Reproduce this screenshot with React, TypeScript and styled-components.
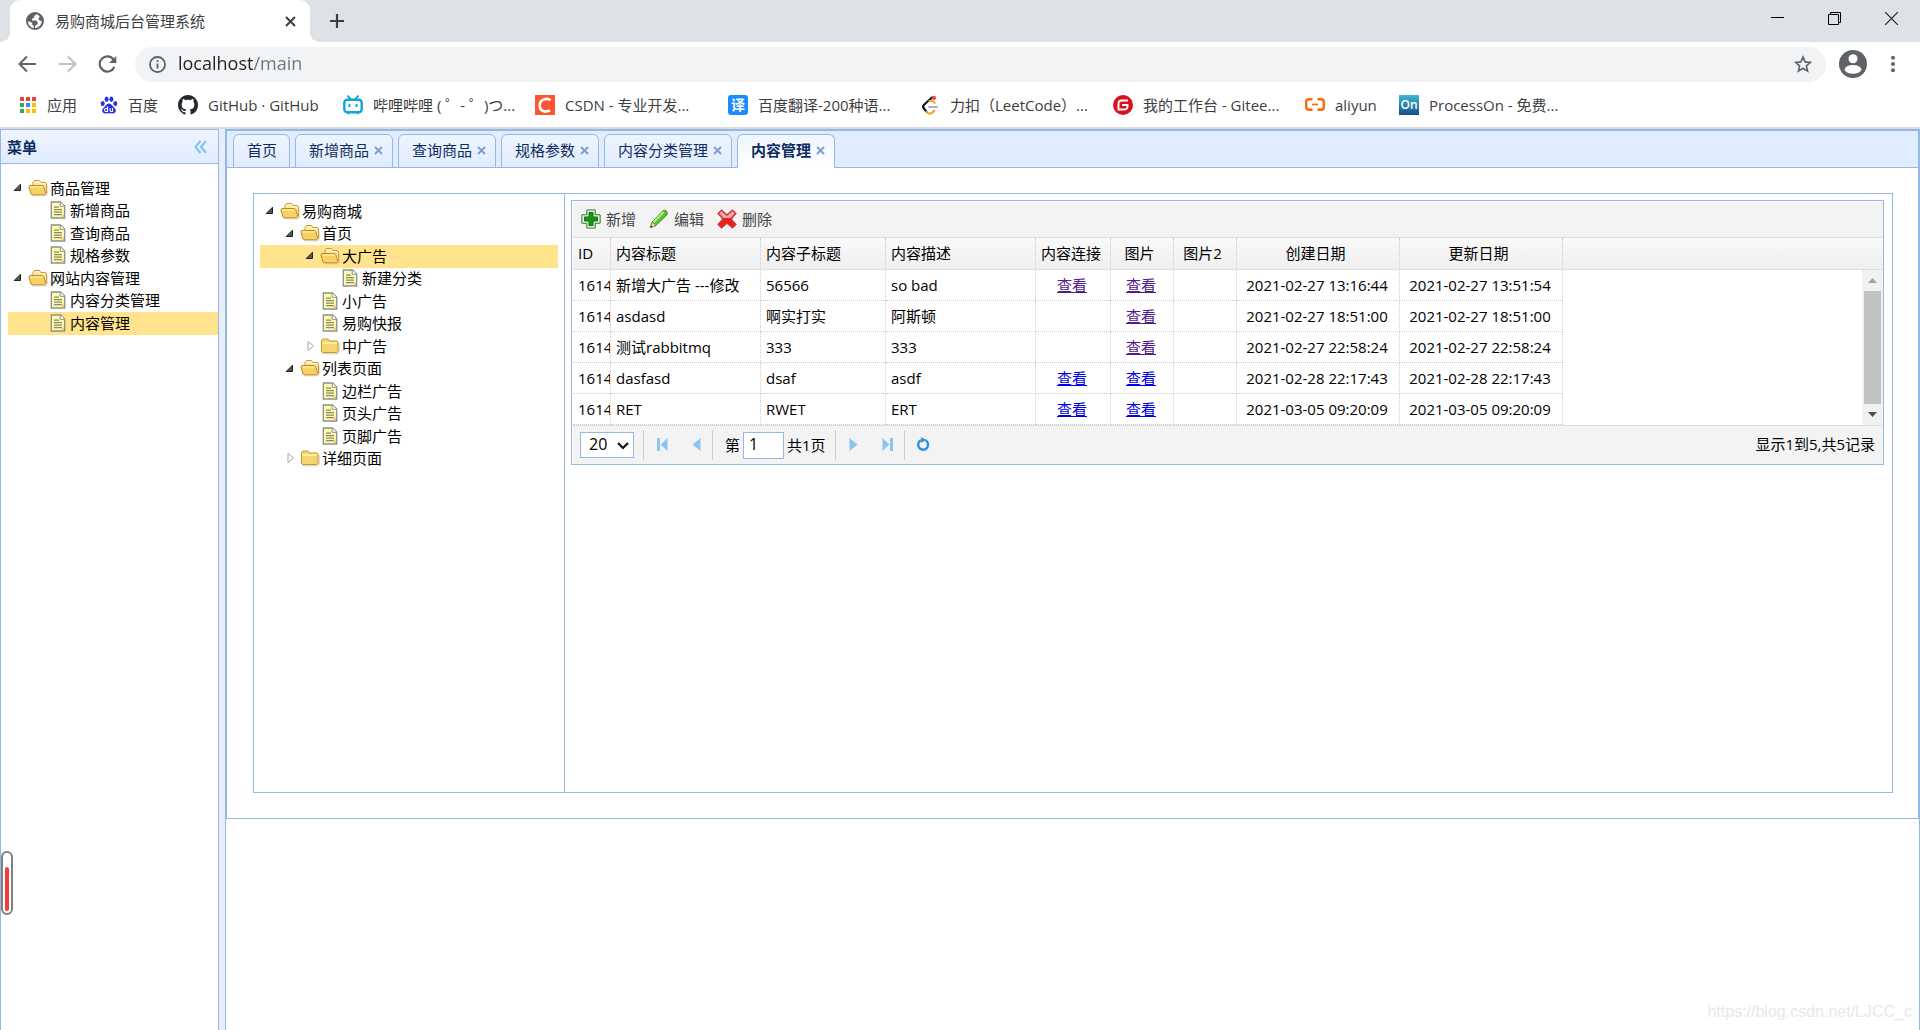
import React from "react";
import styled, { createGlobalStyle, css } from "styled-components";

const line = "#95b8e7";
const navy = "#0e2d5f";
const gray = "#5f6368";

const Global = createGlobalStyle`
  *, *::before, *::after { box-sizing: border-box; }
  body { margin: 0; background: #fff; }
  body, button, input, select {
    font-family: "Open Sans", "Noto Sans", "Noto Sans CJK SC", sans-serif;
    font-size: 15px;
    line-height: 20px;
  }
  button { border: 0; padding: 0; background: none; color: inherit; cursor: pointer; }
  ul { list-style: none; margin: 0; padding: 0; }
  svg { display: block; flex: none; }
`;

/* ---------- browser frame ---------- */

const Page = styled.div`
  min-height: 100vh;
  display: flex;
  flex-direction: column;
  position: relative;
`;

const TabStrip = styled.header`
  height: 42px;
  display: flex;
  align-items: stretch;
  background: #dee1e6;
  padding-left: 10px;
`;

const BrowserTab = styled.div`
  width: 300px;
  display: flex;
  align-items: center;
  gap: 11px;
  padding: 0 14px 0 16px;
  background: #fff;
  border-radius: 10px 10px 0 0;
  color: #3c4043;
  position: relative;
  &::before, &::after {
    content: "";
    position: absolute;
    bottom: 0;
    width: 10px;
    height: 10px;
  }
  &::before { left: -10px; background: radial-gradient(circle at 0 0, transparent 10px, #fff 10px); }
  &::after { right: -10px; background: radial-gradient(circle at 100% 0, transparent 10px, #fff 10px); }
`;

const BrowserTabTitle = styled.span`
  flex: 1;
`;

const NewTab = styled.button`
  margin-left: 19px;
`;

const WindowButtons = styled.div`
  margin-left: auto;
  display: flex;
  align-items: flex-start;
`;

const WindowButton = styled.button`
  width: 57px;
  height: 37px;
  display: flex;
  align-items: center;
  justify-content: center;
`;

const NavBar = styled.nav`
  height: 45px;
  display: flex;
  align-items: center;
  padding: 0 17px 1px 17px;
`;

const NavButton = styled.button`
  width: 40px;
  height: 30px;
  display: flex;
  align-items: center;
`;

const AddressBar = styled.div`
  flex: 1;
  height: 35px;
  margin-right: 13px;
  margin-left: -2px;
  display: flex;
  align-items: center;
  gap: 12px;
  padding: 0 14px 0 14px;
  border-radius: 18px;
  background: #f1f3f4;
`;

const AddressInput = styled.input`
  flex: 1;
  min-width: 0;
  padding: 0 0 2px;
  border: 0;
  outline: 0;
  font-size: 18px;
  line-height: 26px;
  color: transparent;
  background: linear-gradient(to right, #202124 76px, #6f7378 76px);
  background-clip: text;
  -webkit-background-clip: text;
`;

const MenuButton = styled.button`
  width: 20px;
  margin-left: 16px;
  display: flex;
  justify-content: center;
`;

const Bookmarks = styled.ul`
  height: 40px;
  display: grid;
  grid-template-columns: 81px 78px 165px 192px 193px 192px 193px 192px 94px auto;
  justify-content: start;
  align-items: center;
  padding: 0 0 4px 19px;
`;

const BookmarkLink = styled.a`
  display: flex;
  align-items: center;
  gap: 10px;
  color: #3c4043;
  text-decoration: none;
  white-space: nowrap;
`;

/* ---------- workspace ---------- */

const Workspace = styled.main`
  flex: 1;
  display: flex;
  gap: 6px;
  background: #e6eef8;
  border-top: 2px solid #dadada;
`;

const Sidebar = styled.aside`
  width: 219px;
  flex: none;
  background: #fff;
  border: 1px solid ${line};
  border-bottom: 0;
`;

const SidebarHeader = styled.div`
  height: 34px;
  display: flex;
  align-items: center;
  justify-content: space-between;
  padding: 0 11px 0 6px;
  border-bottom: 1px solid ${line};
  background: linear-gradient(to bottom, #eff5ff, #e0ecff);
  color: ${navy};
  font-weight: bold;
`;

const SidebarBody = styled.div`
  padding: 13px 0 0 7px;
`;

const Center = styled.section`
  flex: 1;
  min-width: 0;
  background: #fff;
  border: 1px solid ${line};
  border-bottom: 0;
`;

const TabsPanel = styled.div`
  border: 1px solid ${line};
`;

const TabList = styled.ul`
  height: 37px;
  display: flex;
  align-items: flex-end;
  gap: 5px;
  padding-left: 6px;
  background: #e0ecff;
  box-shadow: inset 0 -1px ${line};
`;

const TabItem = styled.li<{ $active?: boolean }>`
  height: 34px;
  display: flex;
  align-items: center;
  gap: 5px;
  padding: 0 9px 2px 13px;
  border: 1px solid ${line};
  border-radius: 6px 6px 0 0;
  background: linear-gradient(to bottom, #eff5ff, #e0ecff);
  color: ${navy};
  &:first-child { padding-right: 12px; }
  ${(p) => p.$active && css`
    border-bottom-color: #fff;
    background: linear-gradient(to bottom, #eff5ff, #fff);
    font-weight: bold;
  `}
`;

const TabButton = styled.button`
  font-weight: inherit;
`;

const TabBody = styled.div`
  padding: 25px 25px 25px 26px;
`;

const ContentPanel = styled.div`
  min-height: 600px;
  display: flex;
  border: 1px solid ${line};
`;

const CategoryPane = styled.div`
  width: 311px;
  flex: none;
  padding: 6px 6px 0 6px;
  border-right: 1px solid ${line};
`;

const GridPane = styled.div`
  flex: 1;
  min-width: 0;
  padding: 6px 8px 0 6px;
`;

/* ---------- tree ---------- */

const TreeRow = styled.li<{ $level: number; $selected?: boolean }>`
  height: 23px;
  display: flex;
  align-items: center;
  padding: 0 0 2px ${(p) => p.$level * 20}px;
  background: ${(p) => (p.$selected ? "#ffe48d" : "transparent")};
  color: #000;
  white-space: nowrap;
  &:nth-child(even) { height: 22px; }
`;

const TreeIcon = styled.span`
  width: 20px;
  display: flex;
  justify-content: center;
`;

const TreeLabel = styled.span`
  padding-left: 2px;
`;

/* ---------- data grid ---------- */

const Grid = styled.div`
  border: 1px solid ${line};
  padding: 1px 0 0 1px;
`;

const Toolbar = styled.div`
  height: 36px;
  display: flex;
  align-items: center;
  gap: 13px;
  padding: 0 0 2px 8px;
  border-bottom: 1px solid #ddd;
  background: #f3f3f3;
`;

const ToolButton = styled.button`
  display: flex;
  align-items: center;
  gap: 5px;
  color: #444;
`;

const GridView = styled.div`
  position: relative;
  border-bottom: 1px solid #ddd;
`;

const Table = styled.table`
  width: 100%;
  table-layout: fixed;
  border-collapse: separate;
  border-spacing: 0;
`;

const HeadRow = styled.tr`
  background: linear-gradient(to bottom, #f9f9f9, #efefef);
`;

const Col = styled.col<{ $w?: number }>`
  ${(p) => p.$w && css`width: ${p.$w}px;`}
`;

const Th = styled.th<{ $center?: boolean; $last?: boolean }>`
  height: 32px;
  padding: 0 10px 2px 5px;
  border-bottom: 1px solid #ddd;
  border-right: ${(p) => (p.$last ? "0" : "1px dotted #ccc")};
  font-weight: normal;
  text-align: ${(p) => (p.$center ? "center" : "left")};
  white-space: nowrap;
`;

const Td = styled.td<{ $center?: boolean; $last?: boolean }>`
  height: 31px;
  padding: ${(p) => (p.$center ? "0 2px 0 0" : "0 0 0 5px")};
  ${(p) => !p.$last && css`
    border-right: 1px dotted #ccc;
    border-bottom: 1px dotted #ccc;
  `}
  text-align: ${(p) => (p.$center ? "center" : "left")};
  white-space: nowrap;
  overflow: hidden;
`;

const ViewLink = styled.a<{ $visited?: boolean }>`
  color: ${(p) => (p.$visited ? "#551a8b" : "#0000ee")};
  text-decoration: underline;
`;

const ScrollTrack = styled.div`
  position: absolute;
  top: 32px;
  right: 0;
  bottom: 0;
  width: 21px;
  display: flex;
  flex-direction: column;
  align-items: center;
  background: #f1f1f1;
`;

const ScrollArrow = styled.button`
  height: 21px;
  display: flex;
  align-items: center;
`;

const ScrollThumb = styled.div`
  flex: 1;
  width: 17px;
  background: #c1c1c1;
`;

const Pager = styled.div`
  height: 38px;
  display: flex;
  align-items: center;
  padding: 0 8px 0 7px;
  background: #f3f3f3;
`;

const PageSize = styled.label`
  position: relative;
  margin-right: 9px;
  svg { position: absolute; right: 5px; top: 10px; pointer-events: none; }
`;

const SizeSelect = styled.select`
  display: block;
  width: 54px;
  height: 26px;
  padding: 0 0 2px 8px;
  appearance: none;
  border: 1px solid ${line};
  border-radius: 0;
  background: #fff;
  font-size: 16px;
`;

const Separator = styled.span`
  width: 1px;
  height: 30px;
  background: #ccc;
`;

const PagerButton = styled.button`
  width: 34px;
  height: 30px;
  padding: 0 0 2px 2px;
  display: flex;
  align-items: center;
  justify-content: center;
`;

const PageField = styled.label`
  display: flex;
  align-items: center;
  gap: 3px;
  padding: 0 9px 0 12px;
`;

const PageInput = styled.input`
  width: 41px;
  height: 27px;
  padding: 0 5px 2px;
  border: 1px solid ${line};
  font-size: 16px;
`;

const PagerInfo = styled.span`
  margin-left: auto;
  padding-bottom: 2px;
`;

/* ---------- overlays ---------- */

const Gauge = styled.div`
  position: absolute;
  left: 1px;
  top: 851px;
  width: 12px;
  height: 64px;
  padding: 14px 2px 2px;
  border: 2px solid #808080;
  border-radius: 6px;
  background: #fff;
`;

const GaugeFill = styled.div`
  height: 44px;
  border-radius: 2px;
  background: #f43b3b;
`;

const Watermark = styled.span`
  position: absolute;
  right: 8px;
  bottom: 8px;
  font-family: "Liberation Sans", Arial, sans-serif;
  font-size: 16px;
  color: #e8e8e8;
`;

/* ---------- drawings ---------- */

const OpenFolder = () => (
  <svg width="20" height="18" viewBox="0 0 20 18">
    <path d="M5 15V3.5L6.5 1.5h5L13 3.5h4.5L18.5 5v9z" fill="#fbe9a0" stroke="#c9952c" />
    <path d="M6.5 5V3.6L7.3 2.7h3.6l1.2 1.8h5" fill="none" stroke="#fffbe0" />
    <path d="M.8 7.5 2 6.5h12.5l1.3 1 2 7-1 1.3H4.2L3 15z" fill="#f7d263" stroke="#c08a20" />
    <path d="M2.2 8h12.4" stroke="#fff3b8" />
    <path d="M4 16.8h14l1-1.6V7" fill="none" stroke="#b9b3a0" strokeOpacity=".7" />
  </svg>
);

const ClosedFolder = () => (
  <svg width="20" height="18" viewBox="0 0 20 18">
    <path d="M1.5 14.5V3.5L3 2h5l1.5 2H17l1 1v9.5l-1 1H2.5z" fill="#f7d56d" stroke="#c9952c" />
    <path d="M2.5 6h14.5" stroke="#fff3b8" strokeWidth="1.5" />
    <path d="M2.5 16.8H18l1.2-1.3V6" fill="none" stroke="#b9b3a0" strokeOpacity=".7" />
  </svg>
);

const FileIcon = () => (
  <svg width="16" height="18" viewBox="0 0 16 18">
    <path d="M1.3 1h9.2L14.7 5v12H1.3z" fill="#fdfbb0" stroke="#8d9088" strokeWidth="1.3" />
    <path d="M10.2 1v4.3h4.3" fill="#fff" stroke="#8d9088" />
    <path d="M4 6.2h5M4 8.7h8M4 11.2h8M4 13.7h8" stroke="#8a8a6a" strokeWidth="1.2" />
    <path d="M14 16.3h-3l3-3.6z" fill="#f7bd8c" />
  </svg>
);

const ArrowOpen = () => (
  <svg width="11" height="9" viewBox="0 0 11 9">
    <path d="M7.500 1.200V7.500H1.200z" fill="#555" stroke="#222" />
  </svg>
);

const ArrowClosed = () => (
  <svg width="10" height="12" viewBox="0 0 10 12">
    <path d="M3 1.500 8.500 6 3 10.500z" fill="#fff" stroke="#a8a8a8" />
  </svg>
);

const CloseMark = () => (
  <svg width="9" height="9" viewBox="0 0 9 9">
    <path d="M1 1l7 7M8 1 1 8" stroke="#7d9cc9" strokeWidth="1.8" />
  </svg>
);

const Globe = () => (
  <svg width="18" height="18" viewBox="0 0 18 18">
    <circle cx="9" cy="9" r="9" fill={gray} />
    <path d="M10.5 2.2 8.2 4v1.7L6 6.8v1.8h4.2l1.6 1.6-.5 2.3-1.9 1-.6 2.6c3.6-.2 6.9-3.1 7-7.1l-2-.2-1.5-1.8 1.4-2.6c-.9-1.1-2-1.8-3.2-2.2z" fill="#fff" />
    <path d="M2 9.2l4.2 1.6v2l1.5 1.2v1.9C4.600 15.5 2 12.800 2 9.200z" fill="#fff" />
  </svg>
);

const AppsIcon = () => {
  const colors = ["#ea4335", "#ea4335", "#ea4335", "#34a853", "#4285f4", "#fbbc04", "#34a853", "#fbbc04", "#fbbc04"];
  return (
    <svg width="18" height="18" viewBox="0 0 18 18">
      {colors.map((c, i) => (
        <rect key={i} x={1 + (i % 3) * 6} y={1 + Math.floor(i / 3) * 6} width="4" height="4" fill={c} />
      ))}
    </svg>
  );
};

const BaiduIcon = () => (
  <svg width="18" height="18" viewBox="0 0 18 18" fill="#2932e1">
    <ellipse cx="2.7" cy="7.5" rx="2" ry="2.5" />
    <ellipse cx="6.6" cy="3.3" rx="2" ry="2.7" />
    <ellipse cx="11.4" cy="3.3" rx="2" ry="2.7" />
    <ellipse cx="15.3" cy="7.5" rx="2" ry="2.5" />
    <path d="M9 7.5c2.5 0 3.500 2.500 5 4s2.500 3 1.300 4.800c-1.300 1.900-4 1-6.300 1s-5 .9-6.300-1C1.500 14.500 2.500 13 4 11.500s2.500-4 5-4z" />
    <path d="M7.5 10.500v5H6a1.400 1.400 0 0 1 0-3h1.500M10 12v2.300q0 1.200 1.200 1.200h1.300V12" fill="none" stroke="#fff" strokeWidth="1.1" />
  </svg>
);

const GithubIcon = () => (
  <svg width="20" height="20" viewBox="0 0 16 16" fill="#24292e">
    <path d="M8 0C3.58 0 0 3.58 0 8c0 3.54 2.29 6.53 5.47 7.59.4.07.55-.17.55-.38 0-.19-.01-.82-.01-1.49-2.01.37-2.53-.49-2.69-.94-.09-.23-.48-.94-.82-1.13-.28-.15-.68-.52-.01-.53.63-.01 1.08.58 1.23.82.72 1.21 1.87.87 2.33.66.07-.52.28-.87.51-1.07-1.78-.2-3.64-.89-3.64-3.95 0-.87.31-1.59.82-2.15-.08-.2-.36-1.02.08-2.12 0 0 .67-.21 2.2.82.64-.18 1.32-.27 2-.27s1.36.09 2 .27c1.53-1.04 2.2-.82 2.2-.82.44 1.1.16 1.92.08 2.12.51.56.82 1.27.82 2.15 0 3.07-1.87 3.75-3.65 3.95.29.25.54.73.54 1.48 0 1.07-.01 1.93-.01 2.2 0 .21.15.46.55.38A8.01 8.01 0 0 0 16 8c0-4.42-3.58-8-8-8z" />
  </svg>
);

const BiliIcon = () => (
  <svg width="20" height="20" viewBox="0 0 20 20" fill="none" stroke="#12a5e0" strokeLinecap="round">
    <rect x="1.3" y="4.8" width="17.4" height="12.4" rx="3" strokeWidth="2.4" />
    <path d="M5 1.200l2.500 3M15 1.200l-2.500 3" strokeWidth="2" />
    <path d="M6.500 9.700v1.600M13.500 9.700v1.600" strokeWidth="2" />
    <path d="M5 18.500h1M14 18.500h1" strokeWidth="1.5" />
  </svg>
);

const Badge = styled.span<{ $bg: string; $round?: number; $size: number }>`
  width: 20px;
  height: 20px;
  display: flex;
  align-items: center;
  justify-content: center;
  border-radius: ${(p) => p.$round || 0}px;
  background: ${(p) => p.$bg};
  color: #fff;
  font-size: ${(p) => p.$size}px;
  font-weight: 600;
`;

const CsdnIcon = () => (
  <svg width="20" height="20" viewBox="0 0 20 20">
    <path d="M0 0h20v20H0z" fill="#fc5531" />
    <path d="M15.500 5.200C12 2.500 5 4 4.700 10.200 4.500 16.500 10.500 17.500 15 15.300" fill="none" stroke="#fff" strokeWidth="2.6" />
  </svg>
);

const LeetIcon = () => (
  <svg width="20" height="20" viewBox="0 0 20 20" fill="none" strokeLinecap="round" strokeWidth="2.2">
    <path d="M12 2.500 4 9.800q-1.700 1.700 0 3.800l2.500 3" stroke="#111" />
    <path d="M6.500 17q3.500 3.500 7-.5l.8-.8M9.500 6l3-.2 2.200 2" stroke="#f5a32c" />
    <path d="M9 12h8" stroke="#b3b3b3" />
    <circle cx="14" cy="2.8" r="1.7" fill="#e14b5a" stroke="#e14b5a" strokeWidth="1" />
  </svg>
);

const GiteeIcon = () => (
  <svg width="20" height="20" viewBox="0 0 20 20">
    <circle cx="10" cy="10" r="10" fill="#d8121c" />
    <path d="M15 5.500H8.500a3 3 0 0 0-3 3v6h6.200a2.800 2.800 0 0 0 2.800-2.800V10H9" fill="none" stroke="#fff" strokeWidth="1.9" />
  </svg>
);

const AliyunIcon = () => (
  <svg width="20" height="20" viewBox="0 0 20 20" fill="none" stroke="#ff6a00" strokeWidth="2.4">
    <path d="M7.500 4.200H4A2.800 2.800 0 0 0 1.200 7v5A2.800 2.800 0 0 0 4 14.800h3.500M12.500 4.200H16A2.800 2.800 0 0 1 18.800 7v5a2.800 2.800 0 0 1-2.800 2.800h-3.500" />
    <path d="M7 9.500h6" strokeWidth="1.6" />
  </svg>
);

const AddIcon = () => (
  <svg width="20" height="20" viewBox="0 0 20 20">
    <path d="M6.500.8h7l.8.8v4.100h4.100l.8.8v7l-.8.8h-4.100v4.100l-.8.8h-7l-.8-.8v-4.100H1.600l-.8-.8v-7l.8-.8h4.100V1.600z" fill="#e2f2df" stroke="#5d8f5d" strokeWidth="1.3" />
    <path d="M8 3.500h4V8h4.500v4H12v4.500H8V12H3.500V8H8z" fill="#159415" stroke="#0b760b" />
  </svg>
);

const PencilIcon = () => (
  <svg width="20" height="20" viewBox="0 0 20 20">
    <path d="M1.500 18.300 3.200 13 13.800 1.800q2-1.300 3.600.2t.6 3.700L6.800 16.600z" fill="#5fbf2c" stroke="#3d8a22" />
    <path d="M4.500 13.300 14.500 3" stroke="#b5ee84" strokeWidth="2" />
    <path d="M1.500 18.300 3.200 13l3.600 3.600z" fill="#f2e2b8" stroke="#6a7a4a" strokeWidth=".7" />
    <path d="M1.200 18.700l.7-2.300 1.500 1.500z" fill="#333" />
  </svg>
);

const DeleteIcon = () => (
  <svg width="20" height="20" viewBox="0 0 20 20">
    <path d="M4.500.8 10 5.500 15.500.8l3.700 3.700L14.500 10l4.700 5.500-3.700 3.700L10 14.500l-5.500 4.700-3.700-3.700L5.500 10 .8 4.500z" fill="#e82020" stroke="#c04040" strokeLinejoin="round" />
    <path d="M4.500 2 10 7l5.500-5 2.300 2.500L13.500 9h-7L2.200 4.500z" fill="#f7a8a8" />
  </svg>
);

/* ---------- content ---------- */

type Node = { label: string; level: number; kind: "open" | "closed" | "file"; selected?: boolean };

const menu: Node[] = [
  { label: "商品管理", level: 0, kind: "open" },
  { label: "新增商品", level: 1, kind: "file" },
  { label: "查询商品", level: 1, kind: "file" },
  { label: "规格参数", level: 1, kind: "file" },
  { label: "网站内容管理", level: 0, kind: "open" },
  { label: "内容分类管理", level: 1, kind: "file" },
  { label: "内容管理", level: 1, kind: "file", selected: true },
];

const categories: Node[] = [
  { label: "易购商城", level: 0, kind: "open" },
  { label: "首页", level: 1, kind: "open" },
  { label: "大广告", level: 2, kind: "open", selected: true },
  { label: "新建分类", level: 3, kind: "file" },
  { label: "小广告", level: 2, kind: "file" },
  { label: "易购快报", level: 2, kind: "file" },
  { label: "中广告", level: 2, kind: "closed" },
  { label: "列表页面", level: 1, kind: "open" },
  { label: "边栏广告", level: 2, kind: "file" },
  { label: "页头广告", level: 2, kind: "file" },
  { label: "页脚广告", level: 2, kind: "file" },
  { label: "详细页面", level: 1, kind: "closed" },
];

const Tree = ({ nodes, name }: { nodes: Node[]; name: string }) => (
  <ul role="tree" aria-label={name}>
    {nodes.map((n) => (
      <TreeRow key={n.label} role="treeitem" aria-level={n.level + 1} aria-selected={!!n.selected} $level={n.level} $selected={n.selected}>
        <TreeIcon>{n.kind === "open" ? <ArrowOpen /> : n.kind === "closed" ? <ArrowClosed /> : null}</TreeIcon>
        <TreeIcon>{n.kind === "open" ? <OpenFolder /> : n.kind === "closed" ? <ClosedFolder /> : <FileIcon />}</TreeIcon>
        <TreeLabel>{n.label}</TreeLabel>
      </TreeRow>
    ))}
  </ul>
);

const bookmarks: [string, React.ReactNode][] = [
  ["应用", <AppsIcon />],
  ["百度", <BaiduIcon />],
  ["GitHub · GitHub", <GithubIcon />],
  ["哔哩哔哩 ( ゜- ゜)つ...", <BiliIcon />],
  ["CSDN - 专业开发...", <CsdnIcon />],
  ["百度翻译-200种语...", <Badge $bg="#1a8cff" $round={3} $size={14}>译</Badge>],
  ["力扣（LeetCode）...", <LeetIcon />],
  ["我的工作台 - Gitee...", <GiteeIcon />],
  ["aliyun", <AliyunIcon />],
  ["ProcessOn - 免费...", <Badge $bg="linear-gradient(#41b6d3, #164f8c)" $size={12}>On</Badge>],
];

const tabs = ["首页", "新增商品", "查询商品", "规格参数", "内容分类管理", "内容管理"];

const columns: [string, number, boolean][] = [
  ["ID", 38, false],
  ["内容标题", 150, false],
  ["内容子标题", 125, false],
  ["内容描述", 150, false],
  ["内容连接", 75, true],
  ["图片", 63, true],
  ["图片2", 63, true],
  ["创建日期", 163, true],
  ["更新日期", 163, true],
];

type Row = { title: string; sub: string; desc: string; link: boolean; visited: boolean; created: string; updated: string };

const rows: Row[] = [
  { title: "新增大广告 ---修改", sub: "56566", desc: "so bad", link: true, visited: true, created: "2021-02-27 13:16:44", updated: "2021-02-27 13:51:54" },
  { title: "asdasd", sub: "啊实打实", desc: "阿斯顿", link: false, visited: true, created: "2021-02-27 18:51:00", updated: "2021-02-27 18:51:00" },
  { title: "测试rabbitmq", sub: "333", desc: "333", link: false, visited: true, created: "2021-02-27 22:58:24", updated: "2021-02-27 22:58:24" },
  { title: "dasfasd", sub: "dsaf", desc: "asdf", link: true, visited: false, created: "2021-02-28 22:17:43", updated: "2021-02-28 22:17:43" },
  { title: "RET", sub: "RWET", desc: "ERT", link: true, visited: false, created: "2021-03-05 09:20:09", updated: "2021-03-05 09:20:09" },
];

const Browser = () => (
  <>
    <TabStrip>
      <BrowserTab>
        <Globe />
        <BrowserTabTitle>易购商城后台管理系统</BrowserTabTitle>
        <button aria-label="关闭标签页">
          <svg width="11" height="11" viewBox="0 0 11 11"><path d="M1 1l9 9M10 1l-9 9" stroke="#3c4043" strokeWidth="2" /></svg>
        </button>
      </BrowserTab>
      <NewTab aria-label="新标签页">
        <svg width="16" height="16" viewBox="0 0 16 16"><path d="M8 1v14M1 8h14" stroke="#3c4043" strokeWidth="2.2" /></svg>
      </NewTab>
      <WindowButtons>
        <WindowButton aria-label="最小化">
          <svg width="13" height="13" viewBox="0 0 13 13"><path d="M0 5.500h13" stroke="#000" /></svg>
        </WindowButton>
        <WindowButton aria-label="还原">
          <svg width="13" height="13" viewBox="0 0 13 13" fill="none" stroke="#000"><path d="M.5 2.500h10v10H.5zM2.500 2.500v-2h10v10h-2" /></svg>
        </WindowButton>
        <WindowButton aria-label="关闭">
          <svg width="13" height="13" viewBox="0 0 13 13"><path d="M0 0l13 13M13 0 0 13" stroke="#222" strokeWidth="1.2" /></svg>
        </WindowButton>
      </WindowButtons>
    </TabStrip>
    <NavBar>
      <NavButton aria-label="后退">
        <svg width="20" height="18" viewBox="0 0 20 18" fill="none" stroke={gray} strokeWidth="2"><path d="M19 9H3M10 1.500 2.500 9l7.500 7.500" /></svg>
      </NavButton>
      <NavButton aria-label="前进">
        <svg width="20" height="18" viewBox="0 0 20 18" fill="none" stroke="#bdc1c6" strokeWidth="2"><path d="M2 9h16M11 1.500 18.500 9 11 16.500" /></svg>
      </NavButton>
      <NavButton aria-label="刷新">
        <svg width="20" height="18" viewBox="0 0 20 18"><path d="M16.500 4.500A7.600 7.600 0 1 0 17.300 12" fill="none" stroke={gray} strokeWidth="2.2" /><path d="M19.300 1v7h-7.300z" fill={gray} /></svg>
      </NavButton>
      <AddressBar>
        <svg width="17" height="17" viewBox="0 0 17 17" fill="none" stroke={gray}><circle cx="8.5" cy="8.5" r="7.5" strokeWidth="1.8" /><path d="M8.500 7.500v5M8.500 4.200V6" strokeWidth="1.9" /></svg>
        <AddressInput aria-label="地址栏" defaultValue="localhost/main" />
        <button aria-label="收藏">
          <svg width="18" height="18" viewBox="0 0 18 18" fill="none" stroke={gray} strokeWidth="1.6"><path d="M9 2l2.100 4.900 5.300.5-4 3.500 1.200 5.200L9 13.300l-4.600 2.800 1.200-5.200-4-3.500 5.300-.5z" /></svg>
        </button>
      </AddressBar>
      <button aria-label="用户">
        <svg width="28" height="28" viewBox="0 0 28 28"><circle cx="14" cy="14" r="14" fill={gray} /><circle cx="14" cy="8.8" r="4.5" fill="#fff" /><ellipse cx="14" cy="19.3" rx="8.3" ry="4.4" fill="#fff" /></svg>
      </button>
      <MenuButton aria-label="菜单">
        <svg width="4" height="18" viewBox="0 0 4 18" fill={gray}><circle cx="2" cy="2.7" r="2" /><circle cx="2" cy="9" r="2" /><circle cx="2" cy="15.3" r="2" /></svg>
      </MenuButton>
    </NavBar>
    <Bookmarks>
      {bookmarks.map(([label, icon]) => (
        <li key={label}><BookmarkLink href="#">{icon}{label}</BookmarkLink></li>
      ))}
    </Bookmarks>
  </>
);

const DataGrid = () => (
  <Grid>
    <Toolbar>
      <ToolButton><AddIcon />新增</ToolButton>
      <ToolButton><PencilIcon />编辑</ToolButton>
      <ToolButton><DeleteIcon />删除</ToolButton>
    </Toolbar>
    <GridView>
      <Table>
        <colgroup>
          {columns.map(([name, w]) => <Col key={name} $w={w} />)}
          <Col />
        </colgroup>
        <thead>
          <HeadRow>
            {columns.map(([name, , center]) => <Th key={name} $center={center}>{name}</Th>)}
            <Th as="td" $last />
          </HeadRow>
        </thead>
        <tbody>
          {rows.map((r) => (
            <tr key={r.title}>
              <Td>1614</Td>
              <Td>{r.title}</Td>
              <Td>{r.sub}</Td>
              <Td>{r.desc}</Td>
              <Td $center>{r.link && <ViewLink href="#" $visited={r.visited}>查看</ViewLink>}</Td>
              <Td $center><ViewLink href="#" $visited={r.visited}>查看</ViewLink></Td>
              <Td />
              <Td $center>{r.created}</Td>
              <Td $center>{r.updated}</Td>
              <Td $last />
            </tr>
          ))}
        </tbody>
      </Table>
      <ScrollTrack>
        <ScrollArrow aria-label="向上滚动"><svg width="9" height="5" viewBox="0 0 9 5"><path d="M0 5 4.500 0 9 5z" fill="#a3a3a3" /></svg></ScrollArrow>
        <ScrollThumb />
        <ScrollArrow aria-label="向下滚动"><svg width="9" height="5" viewBox="0 0 9 5"><path d="M0 0h9L4.500 5z" fill="#505050" /></svg></ScrollArrow>
      </ScrollTrack>
    </GridView>
    <Pager>
      <PageSize>
        <SizeSelect aria-label="每页条数" defaultValue="20"><option>10</option><option>20</option><option>50</option></SizeSelect>
        <svg width="12" height="8" viewBox="0 0 12 8"><path d="M1 1l5 5 5-5" fill="none" stroke="#111" strokeWidth="2.2" /></svg>
      </PageSize>
      <Separator />
      <PagerButton aria-label="首页"><svg width="12" height="13" viewBox="0 0 12 13" fill="#8cc5f0"><path d="M1 0h3v13H1zM11.500 0v13L4.500 6.500z" /></svg></PagerButton>
      <PagerButton aria-label="上一页"><svg width="9" height="13" viewBox="0 0 9 13"><path d="M8.500 0v13L.5 6.500z" fill="#8cc5f0" /></svg></PagerButton>
      <Separator />
      <PageField>第<PageInput defaultValue="1" />共1页</PageField>
      <Separator />
      <PagerButton aria-label="下一页"><svg width="9" height="13" viewBox="0 0 9 13"><path d="M.5 0v13l8-6.500z" fill="#8cc5f0" /></svg></PagerButton>
      <PagerButton aria-label="末页"><svg width="12" height="13" viewBox="0 0 12 13" fill="#8cc5f0"><path d="M8 0h3v13H8zM.5 0v13l7-6.500z" /></svg></PagerButton>
      <Separator />
      <PagerButton aria-label="刷新"><svg width="14" height="15" viewBox="0 0 14 15"><path d="M9.500 3.300A5 5 0 1 1 5 3.200" fill="none" stroke="#2a92dc" strokeWidth="2.4" /><path d="M5 0l5 2.700L5.500 6z" fill="#2a92dc" /></svg></PagerButton>
      <PagerInfo>显示1到5,共5记录</PagerInfo>
    </Pager>
  </Grid>
);

export default function App() {
  return (
    <Page>
      <Global />
      <Browser />
      <Workspace>
        <Sidebar>
          <SidebarHeader>
            菜单
            <button aria-label="收起菜单">
              <svg width="13" height="14" viewBox="0 0 13 14" fill="none" stroke="#83bff3" strokeWidth="2"><path d="M6.500 1 1.500 7l5 6M12 1 7 7l5 6" /></svg>
            </button>
          </SidebarHeader>
          <SidebarBody><Tree nodes={menu} name="菜单" /></SidebarBody>
        </Sidebar>
        <Center>
          <TabsPanel>
            <TabList>
              {tabs.map((t, i) => (
                <TabItem key={t} $active={i === tabs.length - 1}>
                  <TabButton>{t}</TabButton>
                  {i > 0 && <button aria-label={`关闭${t}`}><CloseMark /></button>}
                </TabItem>
              ))}
            </TabList>
            <TabBody>
              <ContentPanel>
                <CategoryPane><Tree nodes={categories} name="内容分类" /></CategoryPane>
                <GridPane><DataGrid /></GridPane>
              </ContentPanel>
            </TabBody>
          </TabsPanel>
        </Center>
      </Workspace>
      <Gauge><GaugeFill /></Gauge>
      <Watermark>https://blog.csdn.net/LJCC_c</Watermark>
    </Page>
  );
}
